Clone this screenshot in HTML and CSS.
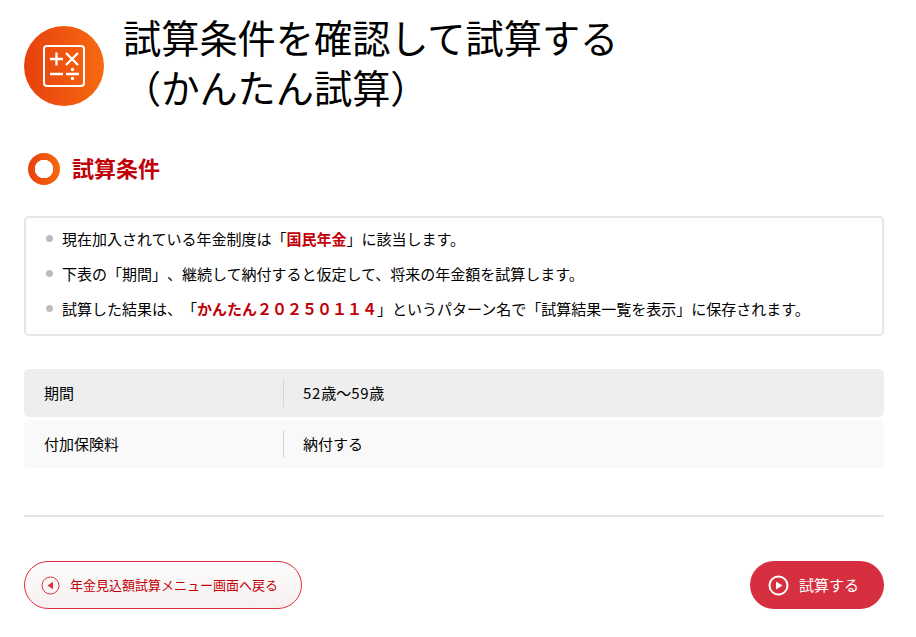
FILE: index.html
```html
<!DOCTYPE html>
<html lang="ja">
<head>
<meta charset="utf-8">
<title>試算条件を確認して試算する</title>
<link rel="stylesheet" href="styles.css">
</head>
<body>
<main class="page">
  <header class="page-head">
    <div class="head-icon">
      <svg width="42" height="42" viewBox="0 0 42 42" fill="none" stroke="#fff" stroke-width="2" stroke-linecap="butt">
        <rect x="1" y="1" width="40" height="40" rx="3"/>
        <path d="M7 14h13M13.500 7.500v13M23 8l12 12M35 8l-12 12" stroke-width="2.300"/>
        <path d="M7 29h13M23 29h13" stroke-width="2.300"/>
        <circle cx="29.500" cy="24.500" r="1.700" fill="#fff" stroke="none"/>
        <circle cx="29.500" cy="33.500" r="1.700" fill="#fff" stroke="none"/>
      </svg>
    </div>
    <h1 class="page-title">試算条件を確認して試算する<br>（かんたん試算）</h1>
  </header>

  <h2 class="section-title"><span class="ring"></span><span class="section-text">試算条件</span></h2>

  <ul class="notes">
    <li>現在加入されている年金制度は「<strong>国民年金</strong>」に該当します。</li>
    <li>下表の「期間」、継続して納付すると仮定して、将来の年金額を試算します。</li>
    <li>試算した結果は、「<strong>かんたん２０２５０１１４</strong>」というパターン名で「試算結果一覧を表示」に保存されます。</li>
  </ul>

  <div class="rows">
    <div class="row row-dark"><div class="row-label">期間</div><div class="row-value"><span class="num">52</span>歳～<span class="num">59</span>歳</div></div>
    <div class="row row-light"><div class="row-label">付加保険料</div><div class="row-value">納付する</div></div>
  </div>

  <hr class="rule">

  <div class="actions">
    <a class="btn btn-back">
      <svg width="19" height="19" viewBox="0 0 19 19" fill="none">
        <circle cx="9.500" cy="9.500" r="8.500" stroke="#d93240" stroke-width="1"/>
        <path d="M12 5.800v7.400L6.500 9.500z" fill="#d93240"/>
      </svg>
      <span class="btn-text">年金見込額試算メニュー画面へ戻る</span>
    </a>
    <a class="btn btn-go">
      <svg width="21" height="21" viewBox="0 0 21 21" fill="none">
        <circle cx="10.500" cy="10.500" r="9" stroke="#fff" stroke-width="2"/>
        <path d="M8 6.500v8l6.500-4z" fill="#fff"/>
      </svg>
      <span class="btn-text">試算する</span>
    </a>
  </div>
</main>
</body>
</html>
```

FILE: styles.css
```css
* { box-sizing: border-box; }
html, body { margin: 0; padding: 0; background: #fff; }
body {
  font-family: "Noto Sans CJK JP", "Noto Sans", sans-serif;
  color: #000;
  font-size: 15px;
  text-spacing-trim: space-all;
}
.page { width: 916px; padding: 0 32px 0 24px; }
.page-head { display: flex; align-items: flex-start; height: 112px; padding-top: 12px; }
.head-icon {
  width: 80px; height: 80px; margin-top: 14px; border-radius: 50%; flex: none;
  background: linear-gradient(90deg, #e8400e, #f56a10);
  display: flex; align-items: center; justify-content: center;
}
.page-title { margin: 0 0 0 19px; font-size: 38.200px; font-weight: 400; line-height: 50px; white-space: nowrap; }
.section-title {
  margin: 40px 0 0 4px; height: 34px; display: flex; align-items: center; gap: 12px;
  font-size: 22px; font-weight: 700; color: #c00008;
}
.section-text { margin-bottom: 4px; }
.ring {
  width: 32px; height: 32px; border-radius: 50%;
  background: radial-gradient(circle, #fff 0 9px, transparent 9.500px), linear-gradient(90deg, #e8400e, #f56a10);
}
.notes {
  list-style: none; margin: 30px 0 0; padding: 3px 20px;
  height: 120px; border: 2px solid #e6e6e6; border-radius: 5px;
}
.notes li { position: relative; height: 35px; line-height: 35px; padding-left: 36px; margin-left: -20px; white-space: nowrap; }
.notes li::before {
  content: ""; position: absolute; left: 20px; top: 14px;
  width: 7px; height: 7px; border-radius: 50%; background: #bdbdbd;
}
.notes strong { color: #c00008; font-weight: 700; }
.rows { margin-top: 33px; display: flex; flex-direction: column; gap: 3px; }
.row { height: 48px; display: flex; align-items: center; border-radius: 5px; }
.row-dark { background: #eee; }
.row-light { background: #f9f9f9; }
.row-label { width: 260px; height: 28px; line-height: 27px; padding-left: 20px; border-right: 1px solid #d5d5d5; }
.row-value { padding-left: 19px; padding-bottom: 2px; }
.num { letter-spacing: .75px; }
.rule { margin: 47px 0 0; border: 0; border-top: 2px solid #e6e6e6; }
.actions { margin-top: 44px; display: flex; justify-content: space-between; }
.btn { height: 48px; border-radius: 24px; display: flex; align-items: center; }
.btn-text { padding-bottom: 2px; }
.btn-back {
  width: 278px; padding-left: 16px; gap: 10px; font-size: 13px; color: #c00008;
  border: 1px solid #e03040; background: linear-gradient(180deg, #fefcfc, #f6f1f1);
}
.btn-go { width: 134px; padding-left: 18px; gap: 10px; background: #d63040; color: #fff; font-size: 15px; }
```
